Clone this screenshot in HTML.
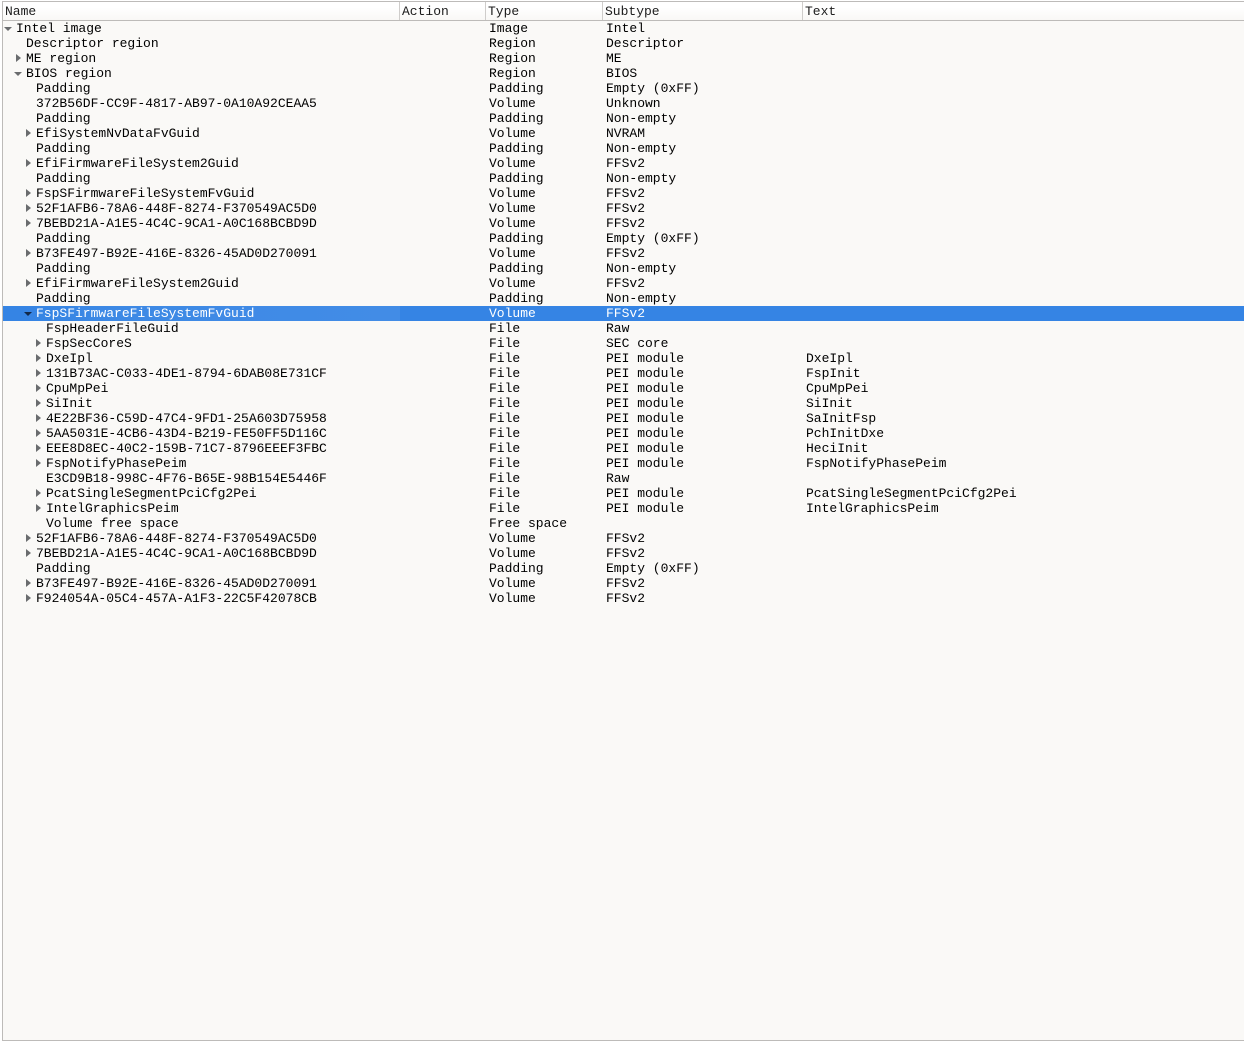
<!DOCTYPE html>
<html>
<head>
<meta charset="utf-8">
<style>
html,body{margin:0;padding:0;width:1244px;height:1041px;overflow:hidden;background:#fff;}
body{position:relative;font-family:"Liberation Mono",monospace;font-size:13px;color:#000;}
#frame{position:absolute;left:2px;top:1px;width:1242px;height:1038px;background:#faf9f7;border-left:1px solid #bdbbb9;border-top:1px solid #bdbbb9;border-bottom:1px solid #bdbbb9;box-sizing:content-box;}
#head{position:absolute;left:3px;top:2px;width:1241px;height:18px;background:linear-gradient(#ffffff 0,#ffffff 30%,#f9f8f6 100%);}
#headline{position:absolute;left:3px;top:20px;width:1241px;height:1px;background:#bdbbb9;}
.sep{position:absolute;top:2px;width:1px;height:18px;background:#cfcdcb;}
.h{position:absolute;top:4px;line-height:16px;white-space:pre;color:#1c1c1c;}
.r{position:absolute;left:3px;width:1241px;height:15px;}
.r span{position:absolute;top:0;line-height:15px;white-space:pre;}
.s{background:#3584e4;color:#fff;}
.g{position:absolute;left:20px;top:0;width:377px;height:15px;background:linear-gradient(90deg,#3584e4 0,#3d89e5 25%,#428ce6 100%);}
.a{position:absolute;top:3px;width:0;height:0;border-top:4.5px solid transparent;border-bottom:4.5px solid transparent;border-left:5px solid #6a6c6e;}
.d{position:absolute;top:6px;width:0;height:0;border-left:4.5px solid transparent;border-right:4.5px solid transparent;border-top:4.5px solid #6a6c6e;}
.s .d{border-top-color:#12294a;}
.c1{left:486px;}
.c2{left:603px;}
.c3{left:803px;}
</style>
</head>
<body>
<div id="frame"></div>
<div id="head"></div>
<div id="headline"></div>
<div class="sep" style="left:399px"></div>
<div class="sep" style="left:485px"></div>
<div class="sep" style="left:602px"></div>
<div class="sep" style="left:802px"></div>
<div class="h" style="left:5px">Name</div>
<div class="h" style="left:402px">Action</div>
<div class="h" style="left:488px">Type</div>
<div class="h" style="left:605px">Subtype</div>
<div class="h" style="left:805px">Text</div>

<div class="r" style="top:21px"><i class="d" style="left:1px"></i><span style="left:13px">Intel image</span><span class="c1">Image</span><span class="c2">Intel</span></div>
<div class="r" style="top:36px"><span style="left:23px">Descriptor region</span><span class="c1">Region</span><span class="c2">Descriptor</span></div>
<div class="r" style="top:51px"><i class="a" style="left:13px"></i><span style="left:23px">ME region</span><span class="c1">Region</span><span class="c2">ME</span></div>
<div class="r" style="top:66px"><i class="d" style="left:11px"></i><span style="left:23px">BIOS region</span><span class="c1">Region</span><span class="c2">BIOS</span></div>
<div class="r" style="top:81px"><span style="left:33px">Padding</span><span class="c1">Padding</span><span class="c2">Empty (0xFF)</span></div>
<div class="r" style="top:96px"><span style="left:33px">372B56DF-CC9F-4817-AB97-0A10A92CEAA5</span><span class="c1">Volume</span><span class="c2">Unknown</span></div>
<div class="r" style="top:111px"><span style="left:33px">Padding</span><span class="c1">Padding</span><span class="c2">Non-empty</span></div>
<div class="r" style="top:126px"><i class="a" style="left:23px"></i><span style="left:33px">EfiSystemNvDataFvGuid</span><span class="c1">Volume</span><span class="c2">NVRAM</span></div>
<div class="r" style="top:141px"><span style="left:33px">Padding</span><span class="c1">Padding</span><span class="c2">Non-empty</span></div>
<div class="r" style="top:156px"><i class="a" style="left:23px"></i><span style="left:33px">EfiFirmwareFileSystem2Guid</span><span class="c1">Volume</span><span class="c2">FFSv2</span></div>
<div class="r" style="top:171px"><span style="left:33px">Padding</span><span class="c1">Padding</span><span class="c2">Non-empty</span></div>
<div class="r" style="top:186px"><i class="a" style="left:23px"></i><span style="left:33px">FspSFirmwareFileSystemFvGuid</span><span class="c1">Volume</span><span class="c2">FFSv2</span></div>
<div class="r" style="top:201px"><i class="a" style="left:23px"></i><span style="left:33px">52F1AFB6-78A6-448F-8274-F370549AC5D0</span><span class="c1">Volume</span><span class="c2">FFSv2</span></div>
<div class="r" style="top:216px"><i class="a" style="left:23px"></i><span style="left:33px">7BEBD21A-A1E5-4C4C-9CA1-A0C168BCBD9D</span><span class="c1">Volume</span><span class="c2">FFSv2</span></div>
<div class="r" style="top:231px"><span style="left:33px">Padding</span><span class="c1">Padding</span><span class="c2">Empty (0xFF)</span></div>
<div class="r" style="top:246px"><i class="a" style="left:23px"></i><span style="left:33px">B73FE497-B92E-416E-8326-45AD0D270091</span><span class="c1">Volume</span><span class="c2">FFSv2</span></div>
<div class="r" style="top:261px"><span style="left:33px">Padding</span><span class="c1">Padding</span><span class="c2">Non-empty</span></div>
<div class="r" style="top:276px"><i class="a" style="left:23px"></i><span style="left:33px">EfiFirmwareFileSystem2Guid</span><span class="c1">Volume</span><span class="c2">FFSv2</span></div>
<div class="r" style="top:291px"><span style="left:33px">Padding</span><span class="c1">Padding</span><span class="c2">Non-empty</span></div>
<div class="r s" style="top:306px"><div class="g"></div><i class="d" style="left:21px"></i><span style="left:33px">FspSFirmwareFileSystemFvGuid</span><span class="c1">Volume</span><span class="c2">FFSv2</span></div>
<div class="r" style="top:321px"><span style="left:43px">FspHeaderFileGuid</span><span class="c1">File</span><span class="c2">Raw</span></div>
<div class="r" style="top:336px"><i class="a" style="left:33px"></i><span style="left:43px">FspSecCoreS</span><span class="c1">File</span><span class="c2">SEC core</span></div>
<div class="r" style="top:351px"><i class="a" style="left:33px"></i><span style="left:43px">DxeIpl</span><span class="c1">File</span><span class="c2">PEI module</span><span class="c3">DxeIpl</span></div>
<div class="r" style="top:366px"><i class="a" style="left:33px"></i><span style="left:43px">131B73AC-C033-4DE1-8794-6DAB08E731CF</span><span class="c1">File</span><span class="c2">PEI module</span><span class="c3">FspInit</span></div>
<div class="r" style="top:381px"><i class="a" style="left:33px"></i><span style="left:43px">CpuMpPei</span><span class="c1">File</span><span class="c2">PEI module</span><span class="c3">CpuMpPei</span></div>
<div class="r" style="top:396px"><i class="a" style="left:33px"></i><span style="left:43px">SiInit</span><span class="c1">File</span><span class="c2">PEI module</span><span class="c3">SiInit</span></div>
<div class="r" style="top:411px"><i class="a" style="left:33px"></i><span style="left:43px">4E22BF36-C59D-47C4-9FD1-25A603D75958</span><span class="c1">File</span><span class="c2">PEI module</span><span class="c3">SaInitFsp</span></div>
<div class="r" style="top:426px"><i class="a" style="left:33px"></i><span style="left:43px">5AA5031E-4CB6-43D4-B219-FE50FF5D116C</span><span class="c1">File</span><span class="c2">PEI module</span><span class="c3">PchInitDxe</span></div>
<div class="r" style="top:441px"><i class="a" style="left:33px"></i><span style="left:43px">EEE8D8EC-40C2-159B-71C7-8796EEEF3FBC</span><span class="c1">File</span><span class="c2">PEI module</span><span class="c3">HeciInit</span></div>
<div class="r" style="top:456px"><i class="a" style="left:33px"></i><span style="left:43px">FspNotifyPhasePeim</span><span class="c1">File</span><span class="c2">PEI module</span><span class="c3">FspNotifyPhasePeim</span></div>
<div class="r" style="top:471px"><span style="left:43px">E3CD9B18-998C-4F76-B65E-98B154E5446F</span><span class="c1">File</span><span class="c2">Raw</span></div>
<div class="r" style="top:486px"><i class="a" style="left:33px"></i><span style="left:43px">PcatSingleSegmentPciCfg2Pei</span><span class="c1">File</span><span class="c2">PEI module</span><span class="c3">PcatSingleSegmentPciCfg2Pei</span></div>
<div class="r" style="top:501px"><i class="a" style="left:33px"></i><span style="left:43px">IntelGraphicsPeim</span><span class="c1">File</span><span class="c2">PEI module</span><span class="c3">IntelGraphicsPeim</span></div>
<div class="r" style="top:516px"><span style="left:43px">Volume free space</span><span class="c1">Free space</span></div>
<div class="r" style="top:531px"><i class="a" style="left:23px"></i><span style="left:33px">52F1AFB6-78A6-448F-8274-F370549AC5D0</span><span class="c1">Volume</span><span class="c2">FFSv2</span></div>
<div class="r" style="top:546px"><i class="a" style="left:23px"></i><span style="left:33px">7BEBD21A-A1E5-4C4C-9CA1-A0C168BCBD9D</span><span class="c1">Volume</span><span class="c2">FFSv2</span></div>
<div class="r" style="top:561px"><span style="left:33px">Padding</span><span class="c1">Padding</span><span class="c2">Empty (0xFF)</span></div>
<div class="r" style="top:576px"><i class="a" style="left:23px"></i><span style="left:33px">B73FE497-B92E-416E-8326-45AD0D270091</span><span class="c1">Volume</span><span class="c2">FFSv2</span></div>
<div class="r" style="top:591px"><i class="a" style="left:23px"></i><span style="left:33px">F924054A-05C4-457A-A1F3-22C5F42078CB</span><span class="c1">Volume</span><span class="c2">FFSv2</span></div>
</body>
</html>
